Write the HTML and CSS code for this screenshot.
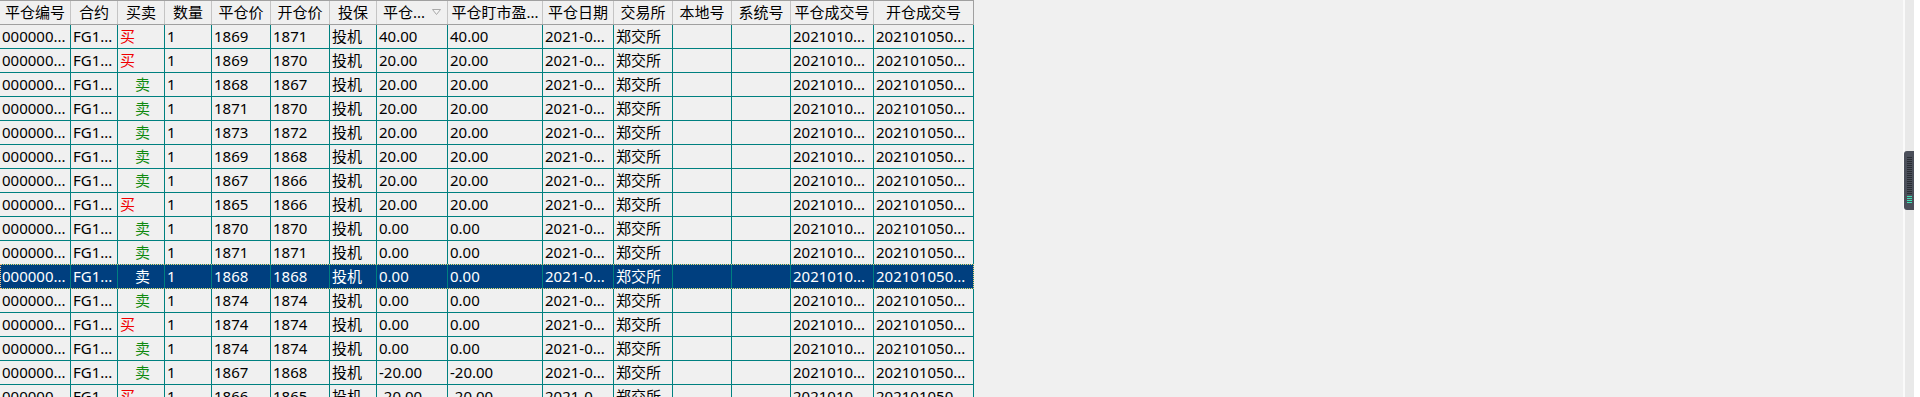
FILE: index.html
```html
<!DOCTYPE html>
<html lang="zh-CN">
<head>
<meta charset="utf-8">
<title>平仓明细</title>
<link rel="stylesheet" href="styles.css">
</head>
<body>
<div class="app">
  <div class="grid">
    <div class="row head">
      <div class="hc">平仓编号</div>
      <div class="hc">合约</div>
      <div class="hc">买卖</div>
      <div class="hc">数量</div>
      <div class="hc">平仓价</div>
      <div class="hc">开仓价</div>
      <div class="hc">投保</div>
      <div class="hc sort"><span>平仓...</span><svg class="arrow" width="9" height="6" viewBox="0 0 9 6"><polygon points="0.5,0.5 8.5,0.5 4.5,5.5" fill="#f4f4f4" stroke="#a9a9a9" stroke-width="1"/></svg></div>
      <div class="hc">平仓盯市盈...</div>
      <div class="hc">平仓日期</div>
      <div class="hc">交易所</div>
      <div class="hc">本地号</div>
      <div class="hc">系统号</div>
      <div class="hc">平仓成交号</div>
      <div class="hc">开仓成交号</div>
    </div>

    <div class="row"><div class="c">000000...</div><div class="c">FG1...</div><div class="c buy">买</div><div class="c">1</div><div class="c">1869</div><div class="c">1871</div><div class="c">投机</div><div class="c">40.00</div><div class="c">40.00</div><div class="c">2021-0...</div><div class="c">郑交所</div><div class="c"></div><div class="c"></div><div class="c">2021010...</div><div class="c">202101050...</div></div>
    <div class="row"><div class="c">000000...</div><div class="c">FG1...</div><div class="c buy">买</div><div class="c">1</div><div class="c">1869</div><div class="c">1870</div><div class="c">投机</div><div class="c">20.00</div><div class="c">20.00</div><div class="c">2021-0...</div><div class="c">郑交所</div><div class="c"></div><div class="c"></div><div class="c">2021010...</div><div class="c">202101050...</div></div>
    <div class="row"><div class="c">000000...</div><div class="c">FG1...</div><div class="c sell">卖</div><div class="c">1</div><div class="c">1868</div><div class="c">1867</div><div class="c">投机</div><div class="c">20.00</div><div class="c">20.00</div><div class="c">2021-0...</div><div class="c">郑交所</div><div class="c"></div><div class="c"></div><div class="c">2021010...</div><div class="c">202101050...</div></div>
    <div class="row"><div class="c">000000...</div><div class="c">FG1...</div><div class="c sell">卖</div><div class="c">1</div><div class="c">1871</div><div class="c">1870</div><div class="c">投机</div><div class="c">20.00</div><div class="c">20.00</div><div class="c">2021-0...</div><div class="c">郑交所</div><div class="c"></div><div class="c"></div><div class="c">2021010...</div><div class="c">202101050...</div></div>
    <div class="row"><div class="c">000000...</div><div class="c">FG1...</div><div class="c sell">卖</div><div class="c">1</div><div class="c">1873</div><div class="c">1872</div><div class="c">投机</div><div class="c">20.00</div><div class="c">20.00</div><div class="c">2021-0...</div><div class="c">郑交所</div><div class="c"></div><div class="c"></div><div class="c">2021010...</div><div class="c">202101050...</div></div>
    <div class="row"><div class="c">000000...</div><div class="c">FG1...</div><div class="c sell">卖</div><div class="c">1</div><div class="c">1869</div><div class="c">1868</div><div class="c">投机</div><div class="c">20.00</div><div class="c">20.00</div><div class="c">2021-0...</div><div class="c">郑交所</div><div class="c"></div><div class="c"></div><div class="c">2021010...</div><div class="c">202101050...</div></div>
    <div class="row"><div class="c">000000...</div><div class="c">FG1...</div><div class="c sell">卖</div><div class="c">1</div><div class="c">1867</div><div class="c">1866</div><div class="c">投机</div><div class="c">20.00</div><div class="c">20.00</div><div class="c">2021-0...</div><div class="c">郑交所</div><div class="c"></div><div class="c"></div><div class="c">2021010...</div><div class="c">202101050...</div></div>
    <div class="row"><div class="c">000000...</div><div class="c">FG1...</div><div class="c buy">买</div><div class="c">1</div><div class="c">1865</div><div class="c">1866</div><div class="c">投机</div><div class="c">20.00</div><div class="c">20.00</div><div class="c">2021-0...</div><div class="c">郑交所</div><div class="c"></div><div class="c"></div><div class="c">2021010...</div><div class="c">202101050...</div></div>
    <div class="row"><div class="c">000000...</div><div class="c">FG1...</div><div class="c sell">卖</div><div class="c">1</div><div class="c">1870</div><div class="c">1870</div><div class="c">投机</div><div class="c">0.00</div><div class="c">0.00</div><div class="c">2021-0...</div><div class="c">郑交所</div><div class="c"></div><div class="c"></div><div class="c">2021010...</div><div class="c">202101050...</div></div>
    <div class="row"><div class="c">000000...</div><div class="c">FG1...</div><div class="c sell">卖</div><div class="c">1</div><div class="c">1871</div><div class="c">1871</div><div class="c">投机</div><div class="c">0.00</div><div class="c">0.00</div><div class="c">2021-0...</div><div class="c">郑交所</div><div class="c"></div><div class="c"></div><div class="c">2021010...</div><div class="c">202101050...</div></div>
    <div class="row selected"><div class="c">000000...</div><div class="c">FG1...</div><div class="c sell">卖</div><div class="c">1</div><div class="c">1868</div><div class="c">1868</div><div class="c">投机</div><div class="c">0.00</div><div class="c">0.00</div><div class="c">2021-0...</div><div class="c">郑交所</div><div class="c"></div><div class="c"></div><div class="c">2021010...</div><div class="c">202101050...</div></div>
    <div class="row"><div class="c">000000...</div><div class="c">FG1...</div><div class="c sell">卖</div><div class="c">1</div><div class="c">1874</div><div class="c">1874</div><div class="c">投机</div><div class="c">0.00</div><div class="c">0.00</div><div class="c">2021-0...</div><div class="c">郑交所</div><div class="c"></div><div class="c"></div><div class="c">2021010...</div><div class="c">202101050...</div></div>
    <div class="row"><div class="c">000000...</div><div class="c">FG1...</div><div class="c buy">买</div><div class="c">1</div><div class="c">1874</div><div class="c">1874</div><div class="c">投机</div><div class="c">0.00</div><div class="c">0.00</div><div class="c">2021-0...</div><div class="c">郑交所</div><div class="c"></div><div class="c"></div><div class="c">2021010...</div><div class="c">202101050...</div></div>
    <div class="row"><div class="c">000000...</div><div class="c">FG1...</div><div class="c sell">卖</div><div class="c">1</div><div class="c">1874</div><div class="c">1874</div><div class="c">投机</div><div class="c">0.00</div><div class="c">0.00</div><div class="c">2021-0...</div><div class="c">郑交所</div><div class="c"></div><div class="c"></div><div class="c">2021010...</div><div class="c">202101050...</div></div>
    <div class="row"><div class="c">000000...</div><div class="c">FG1...</div><div class="c sell">卖</div><div class="c">1</div><div class="c">1867</div><div class="c">1868</div><div class="c">投机</div><div class="c">-20.00</div><div class="c">-20.00</div><div class="c">2021-0...</div><div class="c">郑交所</div><div class="c"></div><div class="c"></div><div class="c">2021010...</div><div class="c">202101050...</div></div>
    <div class="row"><div class="c">000000...</div><div class="c">FG1...</div><div class="c buy">买</div><div class="c">1</div><div class="c">1866</div><div class="c">1865</div><div class="c">投机</div><div class="c">-20.00</div><div class="c">-20.00</div><div class="c">2021-0...</div><div class="c">郑交所</div><div class="c"></div><div class="c"></div><div class="c">2021010...</div><div class="c">202101050...</div></div>
  </div>
  <div class="blank"></div>
  <div class="edge">
    <div class="handle">
      <div class="grip"></div>
      <div class="glow"></div>
    </div>
  </div>
</div>
</body>
</html>
```

FILE: styles.css
```css
* { box-sizing: border-box; }

html, body {
  margin: 0;
  padding: 0;
  background: #f0f0f0;
}

body {
  font-family: "Noto Sans", "Noto Sans CJK SC", sans-serif;
  font-size: 15px;
  color: #000;
  overflow: hidden;
}

.app {
  display: flex;
  width: 1920px;
  height: 397px;
  overflow: hidden;
}

.grid {
  width: 974px;
  flex: none;
  display: flex;
  flex-direction: column;
}

.row {
  position: relative;
  display: grid;
  grid-template-columns: 71px 47px 47px 47px 59px 59px 47px 71px 95px 71px 59px 59px 59px 83px 100px;
  height: 24px;
  flex: none;
}

.head {
  height: 25px;
  border-top: 1px solid #a0a0a0;
  border-bottom: 1px solid #a0a0a0;
}

.hc {
  border-right: 1px solid #c4c4c4;
  text-align: center;
  line-height: 23px;
  white-space: nowrap;
  overflow: hidden;
}

.hc:last-child {
  border-right-color: #a0a0a0;
}

.hc.sort {
  display: flex;
  align-items: center;
  padding-left: 6px;
  padding-right: 6px;
}

.hc.sort .arrow {
  margin-left: auto;
  margin-top: -2px;
}

.c {
  border-right: 1px solid #008080;
  border-bottom: 1px solid #008080;
  padding-left: 2px;
  line-height: 23px;
  white-space: nowrap;
  overflow: hidden;
}

.c.buy { color: #f00000; }

.c.sell {
  color: #108a10;
  text-align: center;
  padding-left: 3px;
}

.selected .c {
  background: #003f7f;
  color: #fff;
}

.selected::after {
  content: "";
  position: absolute;
  left: 0;
  right: 0;
  top: -1px;
  bottom: 0;
  border: 1px dotted #ffc080;
  pointer-events: none;
}

.blank {
  flex: 1;
}

.edge {
  width: 17px;
  flex: none;
  background: linear-gradient(to right, #fafafa 0 2px, #e9e9e9 2px 11px, #ffffff 11px);
}

.handle {
  margin-top: 151px;
  margin-left: 1px;
  width: 10px;
  height: 59px;
  background: #4b4f5a;
  border-radius: 3px 0 0 3px;
  padding-top: 6px;
  padding-left: 3px;
}

.grip {
  width: 5px;
  height: 37px;
  background: repeating-linear-gradient(to bottom, #2b2e35 0 1px, transparent 1px 2px);
}

.glow {
  width: 5px;
  height: 7px;
  margin-top: 2px;
  background: repeating-linear-gradient(to bottom, #3fe0b6 0 1px, transparent 1px 2px);
}
```
